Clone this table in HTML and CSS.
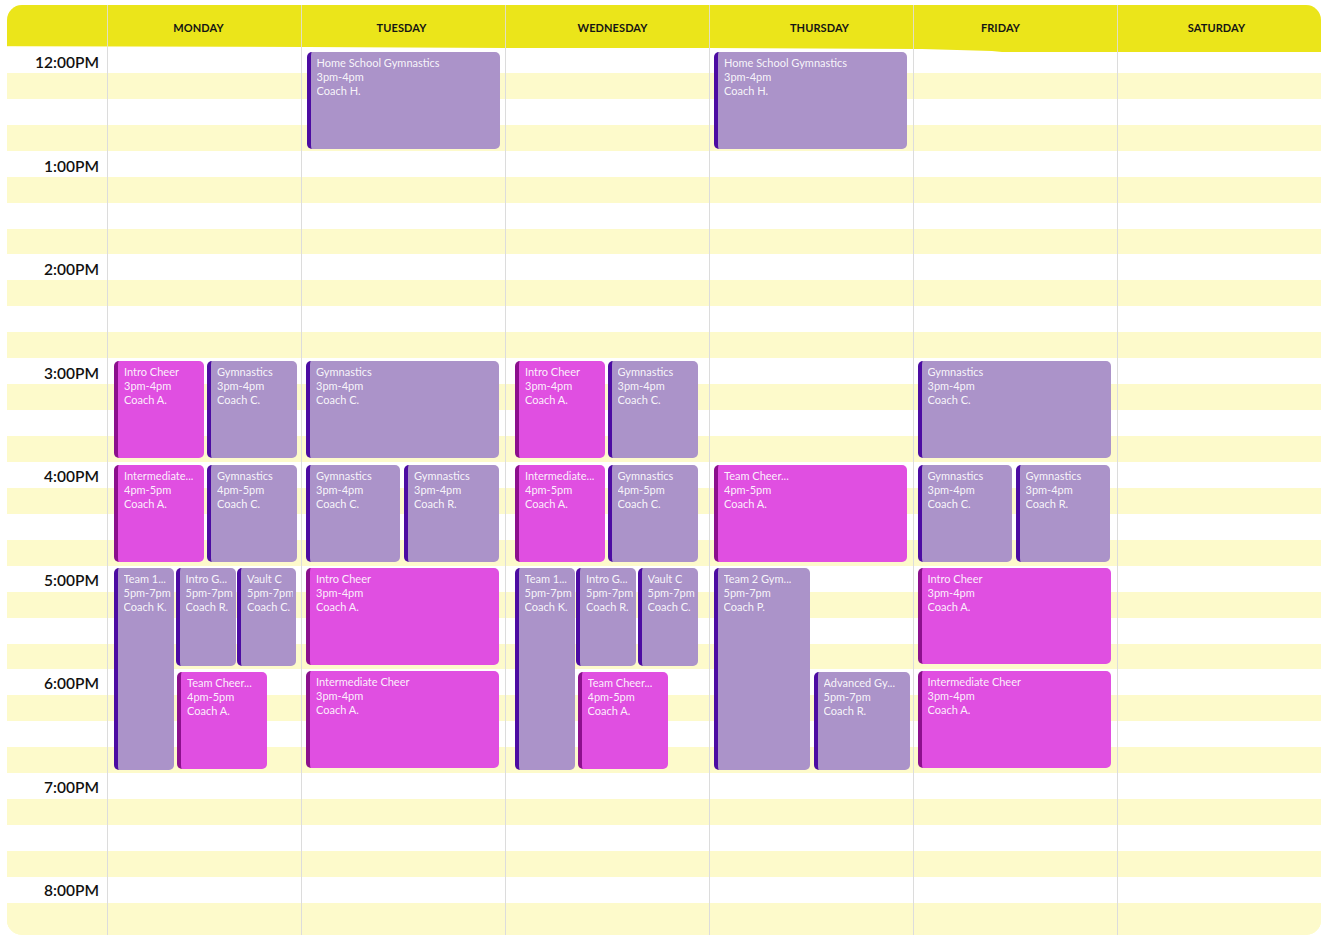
FILE: index.html
```html
<!DOCTYPE html>
<html lang="en">
<head>
<meta charset="utf-8">
<title>Weekly Schedule</title>
<link rel="stylesheet" href="styles.css">
</head>
<body>
<div class="calendar">
  <div class="cal-head">
    <div class="head-cell head-time"></div>
    <div class="head-cell head-mon"><span>Monday</span></div>
    <div class="head-cell head-tue"><span>Tuesday</span></div>
    <div class="head-cell head-wed"><span>Wednesday</span></div>
    <div class="head-cell head-thu"><span>Thursday</span></div>
    <div class="head-cell head-fri"><span>Friday</span></div>
    <div class="head-cell head-sat"><span>Saturday</span></div>
  </div>
  <div class="cal-body">
    <div class="time-col">
      <div class="hour">12:00PM</div>
      <div class="hour">1:00PM</div>
      <div class="hour">2:00PM</div>
      <div class="hour">3:00PM</div>
      <div class="hour">4:00PM</div>
      <div class="hour">5:00PM</div>
      <div class="hour">6:00PM</div>
      <div class="hour">7:00PM</div>
      <div class="hour">8:00PM</div>
    </div>

    <div class="day-col">
      <div class="event cheer" style="left:6px;top:314px;width:90px;height:97px"><p>Intro Cheer</p><p>3pm-4pm</p><p>Coach A.</p></div>
      <div class="event gym" style="left:99px;top:314px;width:90px;height:97px"><p>Gymnastics</p><p>3pm-4pm</p><p>Coach C.</p></div>
      <div class="event cheer" style="left:6px;top:418px;width:90px;height:97px"><p>Intermediate...</p><p>4pm-5pm</p><p>Coach A.</p></div>
      <div class="event gym" style="left:99px;top:418px;width:90px;height:97px"><p>Gymnastics</p><p>4pm-5pm</p><p>Coach C.</p></div>
      <div class="event gym" style="left:5.5px;top:520.5px;width:60px;height:202px"><p>Team 1...</p><p>5pm-7pm</p><p>Coach K.</p></div>
      <div class="event gym" style="left:67.5px;top:520.5px;width:60px;height:98px"><p>Intro G...</p><p>5pm-7pm</p><p>Coach R.</p></div>
      <div class="event gym" style="left:129px;top:520.5px;width:59px;height:98px"><p>Vault C</p><p>5pm-7pm</p><p>Coach C.</p></div>
      <div class="event cheer" style="left:69px;top:625px;width:90px;height:97px"><p>Team Cheer...</p><p>4pm-5pm</p><p>Coach A.</p></div>
    </div>

    <div class="day-col">
      <div class="event gym" style="left:4.5px;top:5px;width:193px;height:97px"><p>Home School Gymnastics</p><p>3pm-4pm</p><p>Coach H.</p></div>
      <div class="event gym" style="left:4px;top:314px;width:193px;height:97px"><p>Gymnastics</p><p>3pm-4pm</p><p>Coach C.</p></div>
      <div class="event gym" style="left:4px;top:418px;width:94px;height:97px"><p>Gymnastics</p><p>3pm-4pm</p><p>Coach C.</p></div>
      <div class="event gym" style="left:102px;top:418px;width:95px;height:97px"><p>Gymnastics</p><p>3pm-4pm</p><p>Coach R.</p></div>
      <div class="event cheer" style="left:4px;top:521px;width:193px;height:97px"><p>Intro Cheer</p><p>3pm-4pm</p><p>Coach A.</p></div>
      <div class="event cheer" style="left:4px;top:624px;width:193px;height:97px"><p>Intermediate Cheer</p><p>3pm-4pm</p><p>Coach A.</p></div>
    </div>

    <div class="day-col">
      <div class="event cheer" style="left:9px;top:314px;width:90px;height:97px"><p>Intro Cheer</p><p>3pm-4pm</p><p>Coach A.</p></div>
      <div class="event gym" style="left:101.5px;top:314px;width:90px;height:97px"><p>Gymnastics</p><p>3pm-4pm</p><p>Coach C.</p></div>
      <div class="event cheer" style="left:9px;top:418px;width:90px;height:97px"><p>Intermediate...</p><p>4pm-5pm</p><p>Coach A.</p></div>
      <div class="event gym" style="left:101.5px;top:418px;width:90px;height:97px"><p>Gymnastics</p><p>4pm-5pm</p><p>Coach C.</p></div>
      <div class="event gym" style="left:8.5px;top:520.5px;width:60px;height:202px"><p>Team 1...</p><p>5pm-7pm</p><p>Coach K.</p></div>
      <div class="event gym" style="left:70px;top:520.5px;width:60px;height:98px"><p>Intro G...</p><p>5pm-7pm</p><p>Coach R.</p></div>
      <div class="event gym" style="left:131.5px;top:520.5px;width:60px;height:98px"><p>Vault C</p><p>5pm-7pm</p><p>Coach C.</p></div>
      <div class="event cheer" style="left:71.5px;top:625px;width:90px;height:97px"><p>Team Cheer...</p><p>4pm-5pm</p><p>Coach A.</p></div>
    </div>

    <div class="day-col">
      <div class="event gym" style="left:4px;top:5px;width:193px;height:97px"><p>Home School Gymnastics</p><p>3pm-4pm</p><p>Coach H.</p></div>
      <div class="event cheer" style="left:4px;top:418px;width:193px;height:97px"><p>Team Cheer...</p><p>4pm-5pm</p><p>Coach A.</p></div>
      <div class="event gym" style="left:3.5px;top:520.5px;width:96px;height:202px"><p>Team 2 Gym...</p><p>5pm-7pm</p><p>Coach P.</p></div>
      <div class="event gym" style="left:103.5px;top:624.5px;width:96px;height:98px"><p>Advanced Gy...</p><p>5pm-7pm</p><p>Coach R.</p></div>
    </div>

    <div class="day-col">
      <div class="event gym" style="left:3.5px;top:314px;width:193px;height:97px"><p>Gymnastics</p><p>3pm-4pm</p><p>Coach C.</p></div>
      <div class="event gym" style="left:3.5px;top:418px;width:94.5px;height:97px"><p>Gymnastics</p><p>3pm-4pm</p><p>Coach C.</p></div>
      <div class="event gym" style="left:101.5px;top:418px;width:94.5px;height:97px"><p>Gymnastics</p><p>3pm-4pm</p><p>Coach R.</p></div>
      <div class="event cheer" style="left:3.5px;top:521px;width:193.5px;height:96px"><p>Intro Cheer</p><p>3pm-4pm</p><p>Coach A.</p></div>
      <div class="event cheer" style="left:3.5px;top:624px;width:193.5px;height:96.5px"><p>Intermediate Cheer</p><p>3pm-4pm</p><p>Coach A.</p></div>
    </div>

    <div class="day-col"></div>
  </div>
</div>
</body>
</html>
```

FILE: styles.css
```css
* { box-sizing: border-box; }

html, body {
  margin: 0;
  padding: 0;
  background: #ffffff;
}

body {
  font-family: Lato, "Open Sans", "Liberation Sans", sans-serif;
  color: #111;
}

.calendar {
  width: 1314px;
  height: 930px;
  margin: 5px 0 0 7px;
  border-radius: 15px;
  overflow: hidden;
  background: #fdfacb;
}

.cal-head {
  position: relative;
  z-index: 2;
  display: grid;
  grid-template-columns: 100px 194px 204px 204px 204px 204px 204px;
  height: 47px;
  background: #ebe51a;
  clip-path: polygon(0 0, 100% 0, 100% 47px, 995px 47px, 985px 46px, 915px 44px, 700px 43px, 500px 43px, 300px 42px, 0 41px);
}

.head-cell {
  display: flex;
  justify-content: center;
  align-items: flex-start;
  padding-top: 16px;
  line-height: 14px;
  font-size: 11px;
  font-weight: 700;
  text-transform: uppercase;
  letter-spacing: 0.1px;
  color: #151515;
}

.head-cell + .head-cell {
  border-left: 1px solid #e2dfc2;
}

.head-mon span { transform: translateX(-6px); }
.head-tue span { transform: translateX(-2px); }
.head-wed span { transform: translateX(5px); }
.head-thu span { transform: translateX(8px); }
.head-fri span { transform: translateX(-15px); }
.head-sat span { transform: translateX(-3px); }

.cal-body {
  display: grid;
  grid-template-columns: 100px 194px 204px 204px 204px 204px 204px;
  height: 888px;
  margin-top: -5px;
  background-color: #fdfacb;
  background-image: repeating-linear-gradient(to bottom, #ffffff 0, #ffffff 25.9375px, #fdfacb 25.9375px, #fdfacb 51.875px);
  background-size: 100% 881.9px;
  background-repeat: no-repeat;
}

.time-col {
  overflow: hidden;
}

.hour {
  height: 103.5px;
  padding: 6px 8px 0 0;
  text-align: right;
  font-size: 15.5px;
  line-height: 18px;
  font-weight: 600;
  color: #111;
}

.day-col {
  position: relative;
  border-left: 1px solid #dcdcdc;
}

.event {
  position: absolute;
  overflow: hidden;
  border-radius: 5px;
  padding: 4px 3px 0 6px;
  font-size: 11px;
  line-height: 14px;
  color: rgba(255, 255, 255, 0.92);
}

.event p {
  margin: 0;
  white-space: nowrap;
  overflow: hidden;
}

.event.gym {
  background: #ab93c9;
  border-left: 4px solid #4c0ca2;
}

.event.cheer {
  background: #e04fe1;
  border-left: 4px solid #8c108d;
}
```
